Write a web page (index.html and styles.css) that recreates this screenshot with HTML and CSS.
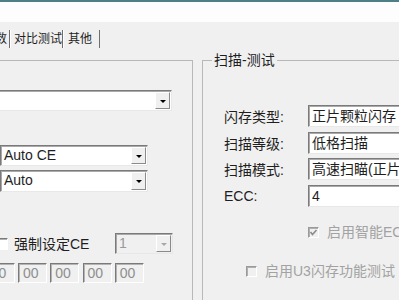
FILE: index.html
```html
<!DOCTYPE html>
<html lang="zh-CN">
<head>
    <meta charset="UTF-8">
    <meta name="viewport" content="width=device-width, initial-scale=1.0">
    <title>扫描-测试</title>
    <link rel="stylesheet" href="styles.css">
</head>
<body>
    <div class="titlebar"></div>

    <div class="tabs">
        <div class="tab first">参数</div>
        <div class="tab second">对比测试</div>
        <div class="tab third">其他</div>
    </div>

    <div class="page">
        <div class="group left">
            <div class="combo c1"><span class="val"></span><i class="btn"></i></div>
            <div class="combo c2"><span class="val">Auto CE</span><i class="btn"></i></div>
            <div class="combo c3"><span class="val">Auto</span><i class="btn"></i></div>
            <div class="ce-row">
                <span class="check"></span>
                <span class="ce-label">强制设定CE</span>
                <div class="combo c4 off"><span class="val">1</span><i class="btn"></i></div>
            </div>
            <div class="hex-row">
                <span class="hex">00</span>
                <span class="hex">00</span>
                <span class="hex">00</span>
                <span class="hex">00</span>
                <span class="hex">00</span>
            </div>
        </div>

        <fieldset class="group scan">
            <legend>扫描-测试</legend>
            <div class="form">
                <label>闪存类型:</label><div class="field">正片颗粒闪存</div>
                <label>扫描等级:</label><div class="field">低格扫描</div>
                <label>扫描模式:</label><div class="field">高速扫瞄(正片)</div>
                <label>ECC:</label><div class="field">4</div>
            </div>
            <div class="opt smart">
                <span class="check off on">
                    <svg width="9" height="9" viewBox="0 0 9 9"><polyline points="1.5,4 3.5,6.5 7.5,2" fill="none" stroke="#8c8c8c" stroke-width="1.6"/></svg>
                </span>
                <span>启用智能ECC</span>
            </div>
            <div class="opt u3">
                <span class="check off"></span>
                <span>启用U3闪存功能测试</span>
            </div>
        </fieldset>
    </div>
</body>
</html>
```

FILE: styles.css
```css
body {
    margin: 0;
    overflow: hidden;
    background: #f0f0f0;
    font-family: "Liberation Sans", "Noto Sans CJK SC", sans-serif;
    font-size: 14px;
    color: #1e1e1e;
}

.titlebar {
    height: 20px;
    border-top: 2px solid #4d7f87;
    background: #fdfdfd;
}

/* tab strip */
.tabs {
    display: flex;
    margin: 8px 0 0 -22px;
    height: 18px;
    font-size: 12px;
    line-height: 16px;
}

.tab {
    box-sizing: border-box;
    padding: 1px 0 0 4px;
    border-left: 1px solid #ffffff;
    border-right: 1px solid #6e6e6e;
    white-space: nowrap;
}

.tab.first { width: 32px; }
.tab.second { width: 53px; padding-left: 3px; }
.tab.third { width: 37px; }

/* page with the two group boxes */
.page {
    display: flex;
    align-items: flex-start;
}

.group {
    box-sizing: border-box;
    flex-shrink: 0;
    border: 1px solid #b8b8b8;
}

.left {
    margin: 12px 0 0 -20px;
    width: 213px;
    height: 260px;
    padding-left: 9px;
    display: flex;
    flex-direction: column;
    align-items: flex-start;
}

/* combo boxes */
.combo {
    box-sizing: border-box;
    display: flex;
    height: 21px;
    background: #fff;
    border-top: 1px solid #7a7a7a;
    border-left: 1px solid #7a7a7a;
    border-right: 1px solid #e8e8e8;
    border-bottom: 1px solid #e8e8e8;
    box-shadow: inset 1px 1px #a9a9a9;
}

.combo .val {
    flex: 1;
    padding: 0 0 0 3px;
    line-height: 19px;
    white-space: nowrap;
    overflow: hidden;
}

.combo .btn {
    box-sizing: border-box;
    width: 15px;
    margin: 1px 1px 1px 0;
    background: #f0f0f0;
    border-top: 1px solid #fff;
    border-left: 1px solid #fff;
    border-right: 1px solid #8a8a8a;
    border-bottom: 1px solid #8a8a8a;
    display: flex;
    align-items: center;
    justify-content: center;
}

.combo .btn::after {
    content: "";
    border-left: 3px solid transparent;
    border-right: 3px solid transparent;
    border-top: 3px solid #000;
    margin-top: 1px;
}

.c1 { width: 182px; margin-top: 29px; }
.c2 { width: 148px; margin: 34px 0 0 10px; }
.c3 { width: 148px; margin: 4px 0 0 10px; height: 22px; }

.combo.off { background: #f0f0f0; color: #9a9a9a; }
.combo.off .btn::after { border-top-color: #a8a8a8; }

.ce-row {
    display: flex;
    align-items: center;
    margin-top: 41px;
}

.check {
    box-sizing: border-box;
    width: 12px;
    height: 12px;
    background: #fff;
    border-top: 1px solid #7a7a7a;
    border-left: 1px solid #7a7a7a;
    border-right: 1px solid #fff;
    border-bottom: 1px solid #fff;
    box-shadow: inset 1px 1px #b0b0b0;
    display: flex;
    align-items: center;
    justify-content: center;
}

.ce-row .check { margin-left: 6px; }

.ce-label {
    width: 101px;
    margin-left: 6px;
    line-height: 18px;
}

.c4 { width: 58px; height: 21px; }

.hex-row {
    display: flex;
    gap: 3.25px;
    margin: 9px 0 0 -4.25px;
}

.hex {
    box-sizing: border-box;
    width: 29px;
    height: 20px;
    padding-left: 4px;
    line-height: 18px;
    color: #8e8e8e;
    border-top: 1px solid #7a7a7a;
    border-left: 1px solid #7a7a7a;
    border-right: 1px solid #fff;
    border-bottom: 1px solid #fff;
    box-shadow: inset 1px 1px #b4b4b4;
}

/* scan test group */
.scan {
    margin: 4px 0 0 9px;
    width: 240px;
    height: 270px;
    padding: 0 0 0 21px;
    min-width: 0;
}

.scan legend {
    margin-left: -12px;
    padding: 0 2px;
    line-height: 16px;
}

.form {
    display: grid;
    grid-template-columns: 84px 120px;
    row-gap: 4.5px;
    align-items: center;
    margin-top: 37px;
}

.field {
    box-sizing: border-box;
    height: 22px;
    padding-left: 3px;
    line-height: 20px;
    background: #fff;
    white-space: nowrap;
    overflow: hidden;
    border-top: 1px solid #7a7a7a;
    border-left: 1px solid #7a7a7a;
    border-right: 1px solid #e8e8e8;
    border-bottom: 1px solid #e8e8e8;
    box-shadow: inset 1px 1px #a9a9a9;
}

.opt {
    display: flex;
    align-items: center;
    color: #a2a2a2;
    line-height: 16px;
    white-space: nowrap;
}

.opt .check { width: 11px; height: 11px; }

.check.off { background: #f0f0f0; border-color: #9a9a9a #fff #fff #9a9a9a; }

.smart { margin: 17.5px 0 0 84px; gap: 8px; }
.u3 { margin: 23px 0 0 22px; gap: 8px; }
```
